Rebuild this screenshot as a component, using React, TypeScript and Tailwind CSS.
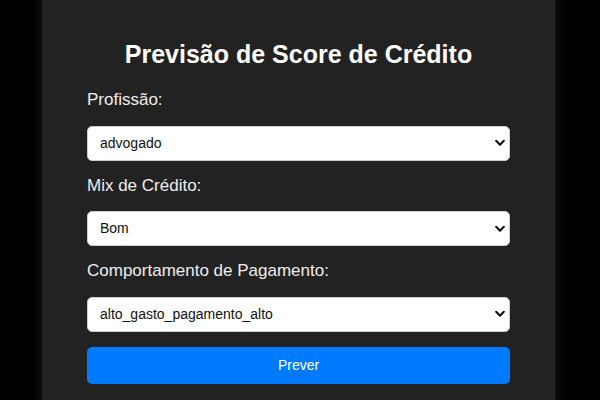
import React from "react";

const Chevron = () => (
  <svg
    className="pointer-events-none absolute right-[5px] top-1/2 -translate-y-1/2"
    width="10"
    height="7"
    viewBox="0 0 10 7"
    fill="none"
  >
    <path d="M1.2 1.3 L5 5.2 L8.8 1.3" stroke="#111" strokeWidth="2.1" strokeLinecap="round" strokeLinejoin="round" />
  </svg>
);

function Field({ label, value, options }: { label: string; value: string; options: string[] }) {
  return (
    <div className="flex flex-col">
      <label className="text-[17px] leading-[20px] text-[#eeeeee] mb-[15.5px]">{label}</label>
      <div className="relative mb-[15px]">
        <select
          defaultValue={value}
          className="appearance-none w-full h-[35px] rounded-[5px] bg-white border border-[#cccccc] pl-[12px] pr-[24px] text-[14px] text-[#111] outline-none"
          style={{ fontFamily: '"Liberation Sans", Arial, sans-serif' }}
        >
          {options.map((o) => (
            <option key={o} value={o}>
              {o}
            </option>
          ))}
        </select>
        <Chevron />
      </div>
    </div>
  );
}

export default function App() {
  return (
    <div
      className="w-[600px] h-[400px] overflow-hidden bg-black flex"
      style={{ fontFamily: '"Liberation Sans", Arial, sans-serif' }}
    >
      <div className="ml-[42px] w-[513px] h-[460px] -mt-[20px] pt-[59px] px-[45px] bg-[#222222] shadow-[0_0_15px_rgba(255,255,255,0.1)] flex flex-col">
        <h2 className="text-[25px] leading-[30px] font-bold text-white text-center mb-[21px]">
          Previsão de Score de Crédito
        </h2>
        <Field label="Profissão:" value="advogado" options={["advogado", "engenheiro", "médico"]} />
        <Field label="Mix de Crédito:" value="Bom" options={["Bom", "Regular", "Ruim"]} />
        <Field
          label="Comportamento de Pagamento:"
          value="alto_gasto_pagamento_alto"
          options={["alto_gasto_pagamento_alto", "baixo_gasto_pagamento_baixo"]}
        />
        <button className="h-[37px] w-full rounded-[5px] bg-[#007bff] text-white text-[14px]">Prever</button>
      </div>
    </div>
  );
}
